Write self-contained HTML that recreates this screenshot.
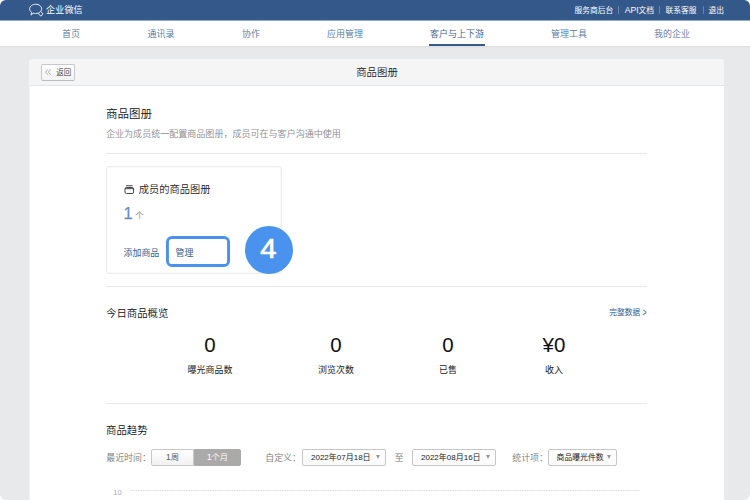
<!DOCTYPE html>
<html lang="zh-CN">
<head>
<meta charset="utf-8">
<title>商品图册</title>
<style>
*{box-sizing:border-box;margin:0;padding:0}
html,body{width:750px;height:500px;overflow:hidden;background:#fff}
body{font-family:"Liberation Sans","Noto Sans CJK SC",sans-serif;color:#222;position:relative;font-weight:350}
#frame{position:absolute;left:0;top:0;width:750px;height:500px;border-radius:6px;overflow:hidden;background:#e8e9eb}
.abs{position:absolute;white-space:nowrap}
#topbar{left:0;top:0;width:750px;height:20px;background:#34588a}
#brand{font-weight:400;left:46px;top:3px;height:14px;line-height:15px;font-size:9px;color:#fff;letter-spacing:.2px}
#toplinks{font-weight:400;right:26px;top:5px;height:12px;line-height:12px;font-size:7.75px;color:#fff}
#toplinks span.sep{display:inline-block;width:1px;height:8px;background:#6785ad;margin:0 5.6px 0 4.8px;vertical-align:-1px}
#toplinks span.sep.l{margin:0 4px 0 7px}
#toplinks b{font-weight:400;font-size:8.6px;line-height:8px}
#nav{left:0;top:20px;width:750px;height:26px;background:#fff;box-shadow:0 1px 2px rgba(0,0,0,.06)}
#tbedge{left:0;top:20px;width:750px;height:1px;background:rgba(52,88,138,.5)}
.nv{top:21px;height:26px;line-height:27px;font-size:9px;color:#55749e;text-align:center;width:80px}
.nv.on{color:#34588a}
#navline{left:429px;top:44px;width:56px;height:2px;background:#34588a}
#panel{left:30px;top:61px;width:694px;height:460px;background:#fff}
#phead{left:30px;top:59px;width:694px;height:27px;background:#f5f5f6;border-bottom:1px solid #e1e5ec;border-radius:2px 2px 0 0}
.pedge2,#pedge{left:29px;top:60px;width:1px;height:440px;background:rgba(255,255,255,.5)}
#back{left:41px;top:64px;width:34px;height:17px;border:1px solid #c6c8cb;border-bottom-color:#b9bbbe;border-radius:2px;background:linear-gradient(#fff,#f3f3f4);font-size:7.5px;line-height:15px;color:#333;padding-left:14.3px}
#ptitle{left:30px;top:59px;width:694px;height:26px;line-height:27px;text-align:center;font-size:10.4px;color:#222}
.hr{left:106px;width:541px;height:1px;background:#e7e9ed}
#h1{left:106px;top:105px;font-size:11.5px;line-height:18px;color:#111;font-weight:350}
#sub{left:106px;font-weight:350;top:127px;transform:translateY(.5px);font-size:9.04px;line-height:12px;color:#8a8a8a}
#card{left:106px;top:166px;width:176px;height:108px;border:1px solid #eee;border-radius:3px;background:#fff;box-shadow:inset 0 0 0 1px #f9f9f9}
#ctitle{left:138.8px;top:183px;font-size:10.24px;line-height:14px;color:#222}
#cnum{left:123.5px;top:202px;font-size:16.5px;line-height:22px;color:#6a8bbd;-webkit-text-stroke:.25px #6a8bbd}
#cunit{left:135px;top:210px;font-size:8.96px;line-height:12px;color:#8a8a8a}
#cadd{left:123.5px;top:247px;font-size:8.96px;line-height:12px;color:#385c8d;font-weight:400}
#mbox{left:166px;top:236px}
#mtxt{left:175.5px;top:247px;font-size:8.96px;line-height:12px;color:#385c8d;font-weight:400}
#badge{left:245px;top:226px;width:48px;height:48px;border-radius:50%;background:#4992ee;color:#fff;font-size:27.5px;line-height:45px;text-align:center;font-weight:400;-webkit-text-stroke:.7px #fff}
#badge span{display:inline-block;transform:translateX(-.3px) scaleX(1.06)}
#h2{left:106px;top:307px;font-size:10.4px;line-height:14px;color:#111}
#more{right:103px;top:307px;font-size:7.75px;line-height:12px;color:#355a8c;font-weight:400}
#more span{display:inline-block;transform:translate(.3px,-.3px) scale(.85,1.45);font-weight:350}
.sn{top:332px;width:100px;text-align:center;font-size:20.5px;line-height:26px;color:#111}
.sl{top:364px;width:100px;text-align:center;font-size:8.96px;line-height:12px;color:#222;font-weight:400}
#h3{left:106px;top:424px;font-size:10.4px;line-height:14px;color:#111;font-weight:350}
.lab{top:452px;font-size:8.96px;line-height:12px;color:#777;margin-left:-.8px}
.btn{top:449px;height:17px;line-height:15px;font-size:8.3px;text-align:center;border:1px solid #c8c8c8;background:linear-gradient(#fff,#f1f1f1);color:#555;border-radius:2px 0 0 2px}
.btn.on{background:#aaa;border-color:#aaa;color:#fff;border-radius:0 2px 2px 0}
.sel{top:449px;height:17px;line-height:15px;font-size:8px;border:1px solid #c4c6c9;border-radius:2px;background:linear-gradient(#fff,#fafafa);color:#222;padding-left:8px;font-weight:400}
.sel i{position:absolute;right:5px;top:5px;width:0;height:0;border-left:2px solid transparent;border-right:2px solid transparent;border-top:4px solid #999}
#y10{left:113.3px;top:488px;font-size:7.5px;line-height:10px;color:#aaa}
#grid{left:131px;top:490px}
</style>
</head>
<body>
<div id="frame">
  <div class="abs" id="topbar"></div>
  <svg class="abs" style="left:29px;top:3px" width="15" height="14" viewBox="0 0 15 14" fill="none" stroke="#e9eef5" stroke-width="1" stroke-linecap="round" stroke-linejoin="round">
    <path d="M9.3 10.1 C8.5 10.4 7.6 10.5 6.65 10.5 C5.7 10.5 4.8 10.35 4 10.05 L2.2 12.2 L2.5 9.3 C1.3 8.4 .65 7.2 .65 5.85 C.65 3.3 3.3 1.25 6.65 1.25 C10 1.25 12.65 3.3 12.65 5.85 C12.65 6.6 12.5 7.2 12.1 7.9"/>
    <path d="M11.8 8.6 L14 10.9 L11.8 13.2 L9.6 10.9 Z" stroke-width="1"/>
  </svg>
  <div class="abs" id="brand">企业微信</div>
  <div class="abs" id="toplinks">服务商后台<span class="sep"></span><b>API</b>文档<span class="sep"></span>联系客服<span class="sep l"></span>退出</div>

  <div class="abs" id="nav"></div>
  <div class="abs nv" style="left:31px">首页</div>
  <div class="abs nv" style="left:121px">通讯录</div>
  <div class="abs nv" style="left:211px">协作</div>
  <div class="abs nv" style="left:305px">应用管理</div>
  <div class="abs nv on" style="left:417px">客户与上下游</div>
  <div class="abs nv" style="left:529px">管理工具</div>
  <div class="abs nv" style="left:632px">我的企业</div>
  <div class="abs" id="navline"></div>
  <div class="abs" id="tbedge"></div>

  <div class="abs" id="panel"></div>
  <div class="abs" id="phead"></div>
  <div class="abs" id="pedge"></div>
  <div class="abs" id="ptitle">商品图册</div>
  <div class="abs" id="back">返回</div>
  <svg class="abs" style="left:45px;top:69px" width="7" height="7" viewBox="0 0 7 7" fill="none" stroke="#999" stroke-width=".8"><path d="M2.9 .4 L.6 3.1 L2.9 5.8 M5.7 .4 L3.4 3.1 L5.7 5.8"/></svg>

  <div class="abs" id="h1">商品图册</div>
  <div class="abs" id="sub">企业为成员统一配置商品图册，成员可在与客户沟通中使用</div>
  <div class="abs hr" style="top:153px"></div>

  <div class="abs" id="card"></div>
  <svg class="abs" style="left:124px;top:184px" width="11" height="11" viewBox="0 0 11 11" fill="none" stroke="#444" stroke-width="1"><path d="M2 1.7 H8.6" stroke-width="1.1"/><rect x="1" y="3.5" width="8.6" height="6" rx="1.5"/><path d="M1 4.7 H9.6" stroke-width="1"/></svg>
  <div class="abs" id="ctitle">成员的商品图册</div>
  <div class="abs" id="cnum">1</div>
  <div class="abs" id="cunit">个</div>
  <div class="abs" id="cadd">添加商品</div>
  <svg class="abs" id="mbox" width="64" height="31" viewBox="0 0 64 31"><rect x="1.45" y="1.45" width="61.1" height="28.1" rx="4.6" fill="#fff" stroke="#4992ee" stroke-width="2.9"/></svg>
  <div class="abs" id="mtxt">管理</div>
  <div class="abs" id="badge"><span>4</span></div>
  <div class="abs hr" style="top:286px"></div>

  <div class="abs" id="h2">今日商品概览</div>
  <div class="abs" id="more">完整数据 <span>&gt;</span></div>
  <div class="abs sn" style="left:160px">0</div>
  <div class="abs sn" style="left:286px">0</div>
  <div class="abs sn" style="left:398px">0</div>
  <div class="abs sn" style="left:504px">¥0</div>
  <div class="abs sl" style="left:160px">曝光商品数</div>
  <div class="abs sl" style="left:286px">浏览次数</div>
  <div class="abs sl" style="left:398px">已售</div>
  <div class="abs sl" style="left:504px">收入</div>
  <div class="abs hr" style="top:403px"></div>

  <div class="abs" id="h3">商品趋势</div>
  <div class="abs lab" style="left:107px">最近时间：</div>
  <div class="abs btn" style="left:151px;width:43px">1周</div>
  <div class="abs btn on" style="left:194px;width:47px">1个月</div>
  <div class="abs lab" style="left:266px">自定义：</div>
  <div class="abs sel" style="left:302px;width:84px">2022年07月18日<i></i></div>
  <div class="abs lab" style="left:395.6px">至</div>
  <div class="abs sel" style="left:412px;width:84px">2022年08月16日<i></i></div>
  <div class="abs lab" style="left:513px">统计项：</div>
  <div class="abs sel" style="left:548px;width:69px;font-size:7.85px;padding-left:7.6px">商品曝光件数<i></i></div>
  <div class="abs" id="y10">10</div>
  <svg class="abs" id="grid" width="509" height="1" viewBox="0 0 509 1"><path d="M0 .5 H509" stroke="#d8d8d8" stroke-width="1" stroke-dasharray="1.4 1" fill="none"/></svg>
</div>
</body>
</html>
